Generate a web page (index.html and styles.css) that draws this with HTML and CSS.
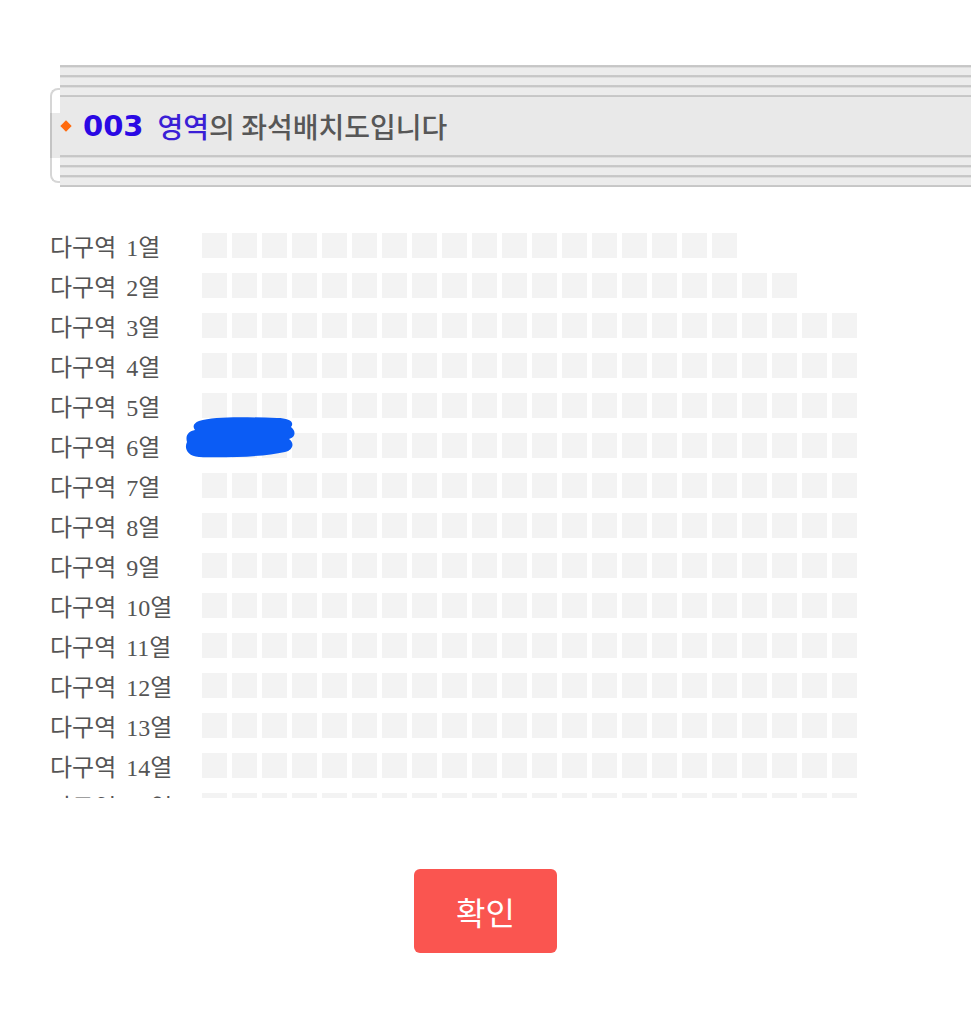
FILE: index.html
```html
<!DOCTYPE html>
<html>
<head>
<meta http-equiv="Content-Type" content="text/html; charset=utf-8"/>
<title>좌석배치도</title>
<link rel="stylesheet" href="styles.css">
</head>
<body>

<div class="title-bar">
  <div class="cap"><span class="cap-fill"></span></div>
  <div class="title-main">
    <div class="stripes"></div>
    <div class="title-band">
      <span class="diamond"></span>
      <span class="area-no">003</span><span class="area-word">영역</span><span class="title-rest">의 좌석배치도입니다</span>
    </div>
    <div class="stripes"></div>
  </div>
</div>

<div class="seat-box">
  <div class="seat-rows" id="rows"></div>
  <!-- masked seat mark -->
  <svg class="scribble" width="112" height="44" viewBox="0 0 112 44">
    <path d="M14 6 C30 1 60 2 92 3 C104 3 110 7 106 12 C111 16 111 22 104 24 C110 28 108 35 100 37 C78 42 40 43 14 42 C2 41 -1 33 2 27 C0 20 4 16 10 15 C7 11 9 8 14 6 Z" fill="#0b5cf5"/>
  </svg>
</div>

<div class="actions">
  <button class="btn-ok">확인</button>
</div>

<script type="text/javascript">
var counts = [18, 20, 22, 22, 22, 22, 22, 22, 22, 22, 22, 22, 22, 22, 22];
var rows = document.getElementById('rows'), i, j, row, html;
for (i = 0; i < counts.length; i++) {
  html = '<span class="row-label">다구역 ' + (i + 1) + '열</span><span class="seats">';
  for (j = 0; j < counts[i]; j++)
    html += '<span class="seat"></span>';
  html += '</span>';
  row = document.createElement('div');
  row.className = 'seat-row';
  row.innerHTML = html;
  rows.appendChild(row);
}
</script>
</body>
</html>
```

FILE: styles.css
```css
body {
  margin: 0;
  background-color: white;
  font-family: "Noto Sans CJK KR", sans-serif;
}

/* title bar */
.title-bar {
  display: flex;
  margin: 65px 0 0 50px;
  height: 122px;
}

.cap {
  width: 10px;
  margin-top: 23px;
  height: 95px;
  box-sizing: border-box;
  border: 2px solid #d6d6d6;
  border-right: none;
  border-radius: 8px 0 0 8px;
  display: flex;
  align-items: center;
}

.cap-fill {
  display: block;
  width: 8px;
  height: 45px;
  margin-left: -2px;
  border-left: 2px solid #c4c4c4;
  background: #e9e9e9;
}

.title-main {
  flex: 1;
  display: flex;
  flex-direction: column;
}

.stripes {
  height: 32px;
  background: repeating-linear-gradient(to bottom,
    #d4d4d4 0, #bdbdbd 1px, #cfcfcf 2px, #ececec 3px, #ececec 10px);
}

.title-band {
  height: 58px;
  background: #e9e9e9;
  display: flex;
  align-items: center;
  padding-left: 2px;
  font-size: 28px;
  font-weight: 500;
  color: #575757;
}

.diamond {
  width: 8px;
  height: 8px;
  background: #ff6a0d;
  transform: rotate(45deg);
  margin-right: 13px;
}

.area-no {
  font-family: "DejaVu Sans", sans-serif;
  font-weight: bold;
  font-size: 29px;
  color: #2a08e4;
  margin-right: 14px;
}

.area-word {
  color: #3a1fd6;
}

/* seat map */
.seat-box {
  position: relative;
  margin: 38px 0 0 50px;
  height: 573px;
  overflow: hidden;
}

.seat-row {
  display: flex;
  align-items: center;
  height: 40px;
}

.row-label {
  width: 152px;
  font-family: "Liberation Serif", "Noto Sans CJK KR", serif;
  font-size: 24px;
  word-spacing: 4px;
  color: #555;
  line-height: 40px;
  padding-top: 5px;
}

.seats {
  display: flex;
  gap: 5px;
}

.seat {
  width: 25px;
  height: 25px;
  background: #f3f3f3;
}

.scribble {
  position: absolute;
  left: 135px;
  top: 190px;
}

/* button */
.actions {
  display: flex;
  justify-content: center;
  margin-top: 71px;
}

.btn-ok {
  width: 143px;
  height: 84px;
  border: none;
  border-radius: 6px;
  background: #fa5550;
  color: white;
  font-family: "Noto Sans CJK KR", sans-serif;
  font-size: 32px;
  font-weight: 400;
}
```
